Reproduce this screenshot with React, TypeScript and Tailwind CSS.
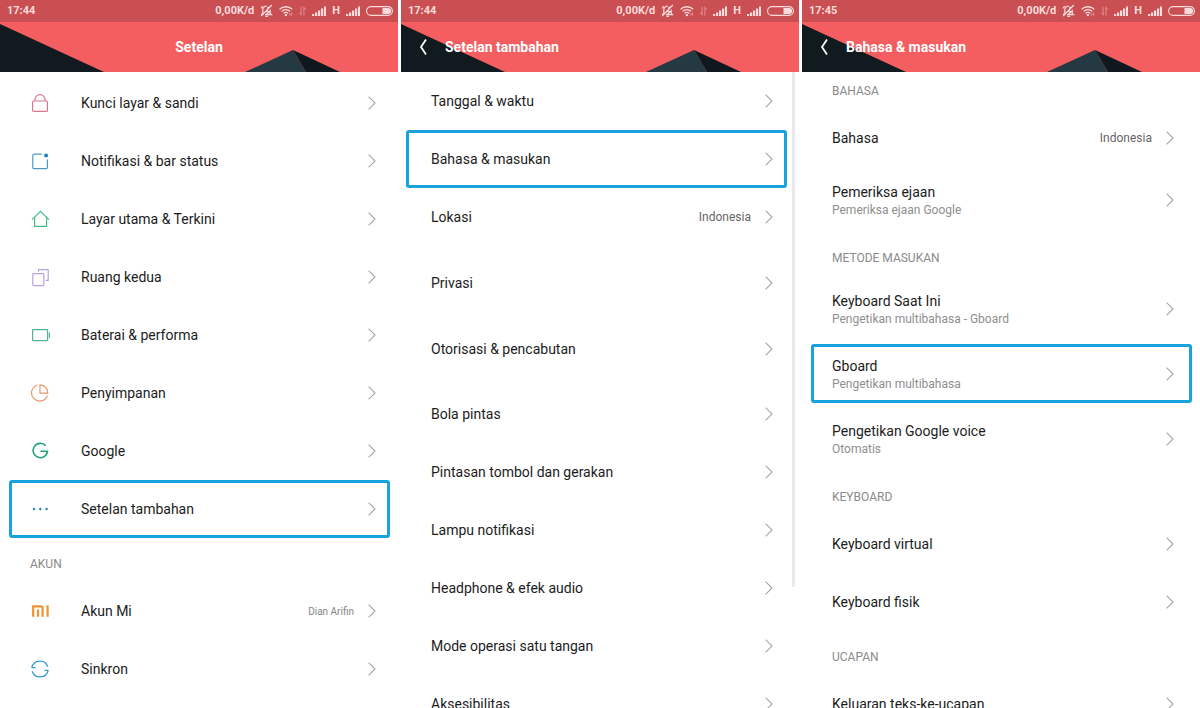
import type { ReactNode } from "react";

type Row = {
  label: string;
  icon?: ReactNode;
  sub?: string;
  value?: string;
  small?: boolean;
  highlighted?: boolean;
  spacing?: string;
};

type Section = {
  title?: string;
  titleClass?: string;
  rows: Row[];
};

const icons = {
  lock: (
    <svg width="20" height="20" viewBox="0 0 20 20" fill="none" stroke="#d9788c" strokeWidth="1.2">
      <rect x="2.6" y="8" width="14.8" height="10.4" rx="1" />
      <path d="M5 8V6.6a5 5 0 0110 0V8" />
    </svg>
  ),
  notification: (
    <svg width="20" height="20" viewBox="0 0 20 20" fill="none" stroke="#4a9cc8" strokeWidth="1.2">
      <path d="M11.6 3.2H4a1.2 1.2 0 00-1.2 1.2v12A1.2 1.2 0 004 17.600h12.200a1.2 1.2 0 001.200-1.200V8.600" />
      <circle cx="16.100" cy="4.400" r="2" fill="#1f86c0" stroke="none" />
    </svg>
  ),
  home: (
    <svg width="20" height="20" viewBox="0 0 20 20" fill="none" stroke="#43bd8a" strokeWidth="1.2">
      <path d="M2 10.600L10.500 2.400 19 10.600M4.600 8.400v9h12v-9" />
    </svg>
  ),
  copy: (
    <svg width="20" height="20" viewBox="0 0 20 20" fill="none" stroke="#b5a5da" strokeWidth="1.2">
      <rect x="2.800" y="6.600" width="11" height="12" rx="0.800" />
      <path d="M8.400 4.800V2.600h9.800v10.800h-2.600" />
    </svg>
  ),
  battery: (
    <svg width="20" height="20" viewBox="0 0 20 20" fill="none" stroke="#4fb592" strokeWidth="1.2">
      <rect x="2.600" y="4.600" width="15" height="11" rx="0.600" />
      <path d="M19.400 7.400v5.400" />
    </svg>
  ),
  storage: (
    <svg width="20" height="20" viewBox="0 0 20 20" fill="none" stroke="#e49a6c" strokeWidth="1.2">
      <path d="M7.400 2A8.200 8.200 0 1017.400 12.800" />
      <path d="M10 1.800v8.400h7.800A8.200 8.200 0 0010 1.800z" />
    </svg>
  ),
  google: (
    <svg width="20" height="20" viewBox="0 0 20 20" fill="none" stroke="#1ea57a" strokeWidth="1.600">
      <path d="M15.600 4.600A7.200 7.200 0 1017.500 10.200H10.400" />
    </svg>
  ),
  more: (
    <svg width="20" height="20" viewBox="0 0 20 20" fill="#1f86b4">
      <circle cx="4" cy="10" r="1.200" />
      <circle cx="10.300" cy="10" r="1.200" />
      <circle cx="16.600" cy="10" r="1.200" />
    </svg>
  ),
  mi: (
    <svg width="20" height="20" viewBox="0 0 20 20" fill="none" stroke="#ee9330" strokeWidth="2.200">
      <path d="M3.200 15.800V5.300h7.200a2.200 2.200 0 012.200 2.200v8.300M17.600 4.200v11.600M8 8.600v7.200" />
    </svg>
  ),
  sync: (
    <svg width="20" height="20" viewBox="0 0 20 20" fill="none" stroke="#3a9ace" strokeWidth="1.300">
      <path d="M1.800 8.600A8.300 8.300 0 0117.800 7.800M18.200 11.400A8.300 8.300 0 012.200 12.200" />
      <path d="M1.600 8.700h4M14.400 11.300h4" />
    </svg>
  ),
};

const mainSections: Section[] = [
  {
    rows: [
      { label: "Kunci layar & sandi", icon: icons.lock },
      { label: "Notifikasi & bar status", icon: icons.notification },
      { label: "Layar utama & Terkini", icon: icons.home },
      { label: "Ruang kedua", icon: icons.copy },
      { label: "Baterai & performa", icon: icons.battery },
      { label: "Penyimpanan", icon: icons.storage },
      { label: "Google", icon: icons.google },
      { label: "Setelan tambahan", icon: icons.more, highlighted: true },
    ],
  },
  {
    title: "AKUN",
    rows: [
      { label: "Akun Mi", icon: icons.mi, value: "Dian Arifin", small: true },
      { label: "Sinkron", icon: icons.sync },
    ],
  },
];

const extraSections: Section[] = [
  {
    rows: [
      { label: "Tanggal & waktu" },
      { label: "Bahasa & masukan", highlighted: true },
      { label: "Lokasi", value: "Indonesia" },
      { label: "Privasi", spacing: "mt-2" },
      { label: "Otorisasi & pencabutan", spacing: "mt-2" },
      { label: "Bola pintas", spacing: "mt-[7px]" },
      { label: "Pintasan tombol dan gerakan" },
      { label: "Lampu notifikasi" },
      { label: "Headphone & efek audio" },
      { label: "Mode operasi satu tangan" },
      { label: "Aksesibilitas" },
    ],
  },
];

const languageSections: Section[] = [
  {
    title: "BAHASA",
    titleClass: "h-[37px]",
    rows: [
      { label: "Bahasa", value: "Indonesia" },
      { label: "Pemeriksa ejaan", sub: "Pemeriksa ejaan Google" },
    ],
  },
  {
    title: "METODE MASUKAN",
    rows: [
      { label: "Keyboard Saat Ini", sub: "Pengetikan multibahasa - Gboard" },
      { label: "Gboard", sub: "Pengetikan multibahasa", highlighted: true },
      { label: "Pengetikan Google voice", sub: "Otomatis" },
    ],
  },
  {
    title: "KEYBOARD",
    rows: [{ label: "Keyboard virtual" }, { label: "Keyboard fisik" }],
  },
  {
    title: "UCAPAN",
    rows: [{ label: "Keluaran teks-ke-ucapan" }],
  },
];

function Signal() {
  return (
    <svg width="14" height="10" viewBox="0 0 14 10" fill="currentColor">
      <rect x="0" y="8" width="2.200" height="2" />
      <rect x="3" y="6.500" width="2.200" height="3.500" />
      <rect x="6" y="4.500" width="2.200" height="5.500" />
      <rect x="9" y="2.500" width="2.200" height="7.500" />
      <rect x="12" y="0.500" width="2" height="9.500" />
    </svg>
  );
}

function StatusBar({ time }: { time: string }) {
  return (
    <div className="flex h-[22px] items-center justify-between bg-[#ca4f52] pl-[7px] pr-[5px] text-[11px] font-bold text-[#fbdcdc]">
      <span>{time}</span>
      <div className="flex items-center gap-[6px]">
        <span>0,00K/d</span>
        {/* Muted bell */}
        <svg width="13" height="14" viewBox="0 0 13 14" fill="none" stroke="currentColor" strokeWidth="1.200">
          <path d="M2.800 9.400V5.600a3.500 3.500 0 013.700-3.400M10.200 5.400v4l1.200 1.200H5M5.400 12.400h2.600M11.800 1L1.200 12M1.200 4.400a5 5 0 011.600-2.200M1 10.200h1.400M8 2.600l-1 5h2.600L5.600 11" />
        </svg>
        {/* Wifi */}
        <svg width="14" height="12" viewBox="0 0 15 12" fill="none" stroke="currentColor" strokeWidth="1.400">
          <path d="M.600 4.200a9.800 9.800 0 0113.600 0M2.800 6.400a6.800 6.800 0 019.200 0M4.900 8.500a3.800 3.800 0 015 0" />
          <circle cx="7.400" cy="10.400" r="1.300" fill="currentColor" stroke="none" />
          <path d="M11.600 11V8.400M13.600 7.800v3" strokeWidth="1" opacity="0.600" />
        </svg>
        {/* Data arrows */}
        <svg width="7" height="10" viewBox="0 0 8 10" fill="none" stroke="currentColor" strokeWidth="1.300" opacity="0.400">
          <path d="M2.400 0v9L.400 6.800M5.600 10V1l2 2.200" />
        </svg>
        <Signal />
        <span>H</span>
        <Signal />
        <svg width="27" height="10" viewBox="0 0 27 10" fill="none">
          <rect x="0.600" y="0.600" width="25.800" height="8.800" rx="4.400" stroke="currentColor" strokeWidth="1.100" />
          <path d="M16.500 2h5.700a3 3 0 010 6h-5.700z" fill="currentColor" />
        </svg>
      </div>
    </div>
  );
}

function Header({ title, back }: { title: string; back?: boolean }) {
  return (
    <header className="relative flex h-[50px] items-center bg-[#f45e60] text-sm font-bold text-white">
      <svg className="absolute inset-0 h-full w-full" viewBox="0 0 398 50" preserveAspectRatio="none">
        <path d="M0 2l104 48H0z" fill="#111a1e" />
        <path d="M293 28l-48 22h61z" fill="#243942" />
        <path d="M293 28l47 22h-34z" fill="#10181f" />
      </svg>
      {back ? (
        <>
          <button aria-label="Kembali" className="relative flex w-11 justify-center">
            <svg width="10" height="18" viewBox="0 0 10 18" fill="none" stroke="currentColor" strokeWidth="1.800">
              <path d="M8 1.500L3 9l5 7.500" />
            </svg>
          </button>
          <h1 className="relative">{title}</h1>
        </>
      ) : (
        <h1 className="relative w-full text-center">{title}</h1>
      )}
    </header>
  );
}

function ListRow({ row, rightPad, frame }: { row: Row; rightPad: string; frame: string }) {
  return (
    <li className={`relative ${row.spacing ?? ""}`}>
      <button className={`flex w-full items-center pl-[30px] text-left ${rightPad} ${row.sub ? "h-[65px]" : "h-[58px]"}`}>
        {row.icon && <span className="mr-[31px]">{row.icon}</span>}
        <span className="flex flex-1 flex-col">
          <span className="text-sm leading-5 text-[#1c1c1c]">{row.label}</span>
          {row.sub && <span className="text-xs leading-4 text-[#8e8e8e]">{row.sub}</span>}
        </span>
        {row.value && (
          <span className={`mr-[14px] ${row.small ? "text-[10px] text-[#858585]" : "text-xs text-[#666]"}`}>
            {row.value}
          </span>
        )}
        <svg width="8" height="14" viewBox="0 0 8 14" fill="none" stroke="#a6a6a6" strokeWidth="1.100">
          <path d="M.600.600L7 7 .600 13.400" />
        </svg>
      </button>
      {row.highlighted && (
        <span
          className={`pointer-events-none absolute rounded-[3px] border-3 border-[#18a3de] ${frame} ${
            row.sub ? "inset-y-[3px]" : "inset-y-0"
          }`}
        />
      )}
    </li>
  );
}

type ScreenProps = {
  time: string;
  title: string;
  back?: boolean;
  sections: Section[];
  rightPad: string;
  frame: string;
  listClass?: string;
  scrollbar?: boolean;
};

function Screen({ time, title, back, sections, rightPad, frame, listClass = "", scrollbar }: ScreenProps) {
  return (
    <section className="flex min-w-0 flex-col overflow-hidden">
      <StatusBar time={time} />
      <Header title={title} back={back} />
      <div className={`relative min-h-0 flex-1 ${listClass}`}>
        {sections.map((section, i) => (
          <div key={i}>
            {section.title && (
              <h2 className={`flex items-center pl-[30px] text-xs text-[#8a8a8a] ${section.titleClass ?? "h-11 pt-2"}`}>
                {section.title}
              </h2>
            )}
            <ul>
              {section.rows.map((row) => (
                <ListRow key={row.label} row={row} rightPad={rightPad} frame={frame} />
              ))}
            </ul>
          </div>
        ))}
        {scrollbar && <div className="absolute right-1 top-0 h-[81%] w-[3px] bg-[#e9e9e9]" />}
      </div>
    </section>
  );
}

export default function App() {
  return (
    <main className="grid h-screen grid-cols-3 gap-[3px] overflow-hidden bg-white font-[Roboto,sans-serif]">
      <Screen
        time="17:44"
        title="Setelan"
        sections={mainSections}
        rightPad="pr-[22px]"
        frame="left-[9px] right-2"
        listClass="pt-[2px]"
      />
      <Screen
        time="17:44"
        title="Setelan tambahan"
        back
        sections={extraSections}
        rightPad="pr-[26px]"
        frame="left-[5px] right-3"
        scrollbar
      />
      <Screen
        time="17:45"
        title="Bahasa & masukan"
        back
        sections={languageSections}
        rightPad="pr-[26px]"
        frame="left-[9px] right-2"
      />
    </main>
  );
}
